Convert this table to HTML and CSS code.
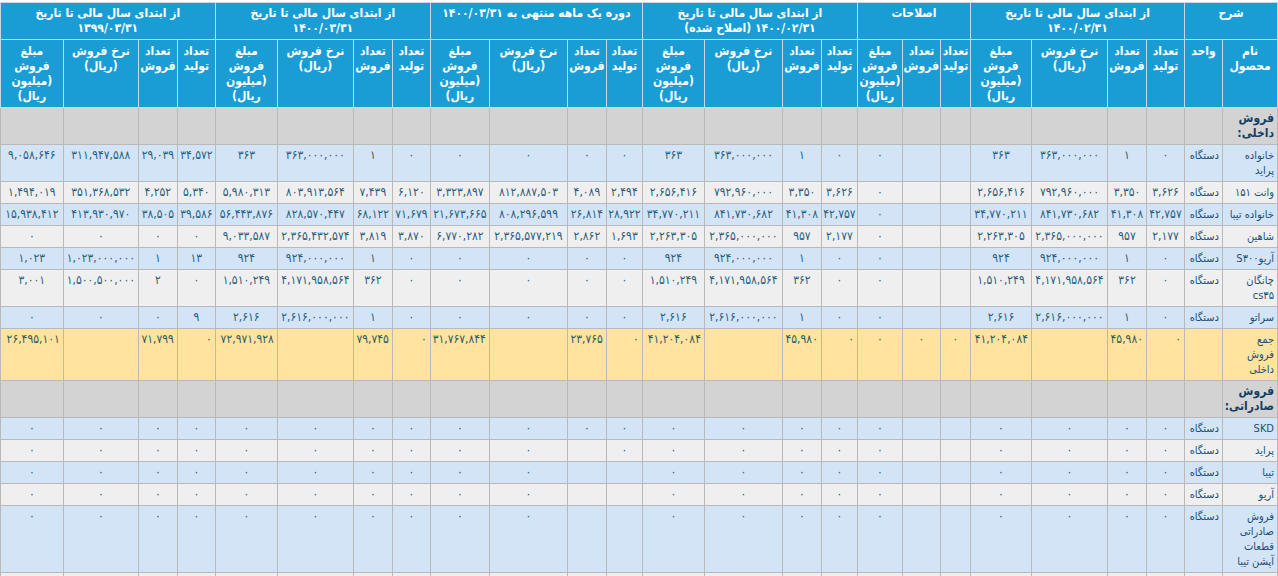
FILE: index.html
```html
<!DOCTYPE html>
<html lang="fa" dir="rtl">
<head>
<meta charset="utf-8">
<title>فروش</title>
<link rel="stylesheet" href="styles.css">
</head>
<body>
<table class="sales">
<colgroup>
<col class="w55"><col class="w38">
<col class="w38"><col class="w39"><col class="w76"><col class="w61">
<col class="w30"><col class="w38"><col class="w45">
<col class="w36"><col class="w39"><col class="w78"><col class="w62">
<col class="w36"><col class="w39"><col class="w78"><col class="w59">
<col class="w38"><col class="w39"><col class="w76"><col class="w62">
<col class="w38"><col class="w39"><col class="w75"><col class="w63">
</colgroup>
<thead>
<tr class="h1">
<th colspan="2">شرح</th>
<th colspan="4">از ابتدای سال مالی تا تاریخ<br>۱۴۰۰/۰۲/۳۱</th>
<th colspan="3">اصلاحات</th>
<th colspan="4">از ابتدای سال مالی تا تاریخ<br>۱۴۰۰/۰۲/۳۱ (اصلاح شده)</th>
<th colspan="4">دوره یک ماهه منتهی به ۱۴۰۰/۰۳/۳۱</th>
<th colspan="4">از ابتدای سال مالی تا تاریخ<br>۱۴۰۰/۰۳/۳۱</th>
<th colspan="4">از ابتدای سال مالی تا تاریخ<br>۱۳۹۹/۰۳/۳۱</th>
</tr>
<tr class="h2">
<th>نام<br>محصول</th><th>واحد</th>
<th>تعداد<br>تولید</th><th>تعداد<br>فروش</th><th>نرخ فروش<br>(ریال)</th><th>مبلغ<br>فروش<br>(میلیون<br>ریال)</th>
<th>تعداد<br>تولید</th><th>تعداد<br>فروش</th><th>مبلغ<br>فروش<br>(میلیون<br>ریال)</th>
<th>تعداد<br>تولید</th><th>تعداد<br>فروش</th><th>نرخ فروش<br>(ریال)</th><th>مبلغ<br>فروش<br>(میلیون<br>ریال)</th>
<th>تعداد<br>تولید</th><th>تعداد<br>فروش</th><th>نرخ فروش<br>(ریال)</th><th>مبلغ<br>فروش<br>(میلیون<br>ریال)</th>
<th>تعداد<br>تولید</th><th>تعداد<br>فروش</th><th>نرخ فروش<br>(ریال)</th><th>مبلغ<br>فروش<br>(میلیون<br>ریال)</th>
<th>تعداد<br>تولید</th><th>تعداد<br>فروش</th><th>نرخ فروش<br>(ریال)</th><th>مبلغ<br>فروش<br>(میلیون<br>ریال)</th>
</tr>
</thead>
<tbody>
<tr class="section">
<td class="lbl sec">فروش<br>داخلی:</td><td></td>
<td></td><td></td><td></td><td></td>
<td></td><td></td><td></td>
<td></td><td></td><td></td><td></td>
<td></td><td></td><td></td><td></td>
<td></td><td></td><td></td><td></td>
<td></td><td></td><td></td><td></td>
</tr>
<tr class="blue">
<td class="lbl">خانواده<br>پراید</td><td class="lbl">دستگاه</td>
<td>۰</td><td>۱</td><td>۳۶۳,۰۰۰,۰۰۰</td><td>۳۶۳</td>
<td></td><td></td><td>۰</td>
<td>۰</td><td>۱</td><td>۳۶۳,۰۰۰,۰۰۰</td><td>۳۶۳</td>
<td>۰</td><td>۰</td><td>۰</td><td>۰</td>
<td>۰</td><td>۱</td><td>۳۶۳,۰۰۰,۰۰۰</td><td>۳۶۳</td>
<td>۳۴,۵۷۲</td><td>۲۹,۰۳۹</td><td>۳۱۱,۹۴۷,۵۸۸</td><td>۹,۰۵۸,۶۴۶</td>
</tr>
<tr class="light">
<td class="lbl">وانت ۱۵۱</td><td class="lbl">دستگاه</td>
<td>۳,۶۲۶</td><td>۳,۳۵۰</td><td>۷۹۲,۹۶۰,۰۰۰</td><td>۲,۶۵۶,۴۱۶</td>
<td></td><td></td><td>۰</td>
<td>۳,۶۲۶</td><td>۳,۳۵۰</td><td>۷۹۲,۹۶۰,۰۰۰</td><td>۲,۶۵۶,۴۱۶</td>
<td>۲,۴۹۴</td><td>۴,۰۸۹</td><td>۸۱۲,۸۸۷,۵۰۳</td><td>۳,۳۲۳,۸۹۷</td>
<td>۶,۱۲۰</td><td>۷,۴۳۹</td><td>۸۰۳,۹۱۳,۵۶۴</td><td>۵,۹۸۰,۳۱۳</td>
<td>۵,۳۴۰</td><td>۴,۲۵۲</td><td>۳۵۱,۳۶۸,۵۳۲</td><td>۱,۴۹۴,۰۱۹</td>
</tr>
<tr class="blue">
<td class="lbl">خانواده تیبا</td><td class="lbl">دستگاه</td>
<td>۴۲,۷۵۷</td><td>۴۱,۳۰۸</td><td>۸۴۱,۷۳۰,۶۸۲</td><td>۳۴,۷۷۰,۲۱۱</td>
<td></td><td></td><td>۰</td>
<td>۴۲,۷۵۷</td><td>۴۱,۳۰۸</td><td>۸۴۱,۷۳۰,۶۸۲</td><td>۳۴,۷۷۰,۲۱۱</td>
<td>۲۸,۹۲۲</td><td>۲۶,۸۱۴</td><td>۸۰۸,۲۹۶,۵۹۹</td><td>۲۱,۶۷۳,۶۶۵</td>
<td>۷۱,۶۷۹</td><td>۶۸,۱۲۲</td><td>۸۲۸,۵۷۰,۴۴۷</td><td>۵۶,۴۴۳,۸۷۶</td>
<td>۳۹,۵۸۶</td><td>۳۸,۵۰۵</td><td>۴۱۳,۹۳۰,۹۷۰</td><td>۱۵,۹۳۸,۴۱۲</td>
</tr>
<tr class="light">
<td class="lbl">شاهین</td><td class="lbl">دستگاه</td>
<td>۲,۱۷۷</td><td>۹۵۷</td><td>۲,۳۶۵,۰۰۰,۰۰۰</td><td>۲,۲۶۳,۳۰۵</td>
<td></td><td></td><td>۰</td>
<td>۲,۱۷۷</td><td>۹۵۷</td><td>۲,۳۶۵,۰۰۰,۰۰۰</td><td>۲,۲۶۳,۳۰۵</td>
<td>۱,۶۹۳</td><td>۲,۸۶۲</td><td>۲,۳۶۵,۵۷۷,۲۱۹</td><td>۶,۷۷۰,۲۸۲</td>
<td>۳,۸۷۰</td><td>۳,۸۱۹</td><td>۲,۳۶۵,۴۳۲,۵۷۴</td><td>۹,۰۳۳,۵۸۷</td>
<td>۰</td><td>۰</td><td>۰</td><td>۰</td>
</tr>
<tr class="blue">
<td class="lbl">آریوS۳۰۰</td><td class="lbl">دستگاه</td>
<td>۰</td><td>۱</td><td>۹۲۴,۰۰۰,۰۰۰</td><td>۹۲۴</td>
<td></td><td></td><td>۰</td>
<td>۰</td><td>۱</td><td>۹۲۴,۰۰۰,۰۰۰</td><td>۹۲۴</td>
<td>۰</td><td>۰</td><td>۰</td><td>۰</td>
<td>۰</td><td>۱</td><td>۹۲۴,۰۰۰,۰۰۰</td><td>۹۲۴</td>
<td>۱۳</td><td>۱</td><td>۱,۰۲۳,۰۰۰,۰۰۰</td><td>۱,۰۲۳</td>
</tr>
<tr class="light">
<td class="lbl">چانگان<br>cs۳۵</td><td class="lbl">دستگاه</td>
<td>۰</td><td>۳۶۲</td><td>۴,۱۷۱,۹۵۸,۵۶۴</td><td>۱,۵۱۰,۲۴۹</td>
<td></td><td></td><td>۰</td>
<td>۰</td><td>۳۶۲</td><td>۴,۱۷۱,۹۵۸,۵۶۴</td><td>۱,۵۱۰,۲۴۹</td>
<td>۰</td><td>۰</td><td>۰</td><td>۰</td>
<td>۰</td><td>۳۶۲</td><td>۴,۱۷۱,۹۵۸,۵۶۴</td><td>۱,۵۱۰,۲۴۹</td>
<td>۰</td><td>۲</td><td>۱,۵۰۰,۵۰۰,۰۰۰</td><td>۳,۰۰۱</td>
</tr>
<tr class="blue">
<td class="lbl">سراتو</td><td class="lbl">دستگاه</td>
<td>۰</td><td>۱</td><td>۲,۶۱۶,۰۰۰,۰۰۰</td><td>۲,۶۱۶</td>
<td></td><td></td><td>۰</td>
<td>۰</td><td>۱</td><td>۲,۶۱۶,۰۰۰,۰۰۰</td><td>۲,۶۱۶</td>
<td>۰</td><td>۰</td><td>۰</td><td>۰</td>
<td>۰</td><td>۱</td><td>۲,۶۱۶,۰۰۰,۰۰۰</td><td>۲,۶۱۶</td>
<td>۹</td><td>۰</td><td>۰</td><td>۰</td>
</tr>
<tr class="total">
<td class="lbl">جمع<br>فروش<br>داخلی</td><td></td>
<td class="r">۰</td><td class="r">۴۵,۹۸۰</td><td></td><td class="r">۴۱,۲۰۴,۰۸۴</td>
<td>۰</td><td>۰</td><td>۰</td>
<td class="r">۰</td><td class="r">۴۵,۹۸۰</td><td></td><td class="r">۴۱,۲۰۴,۰۸۴</td>
<td class="r">۰</td><td class="r">۲۳,۷۶۵</td><td></td><td class="r">۳۱,۷۶۷,۸۴۴</td>
<td class="r">۰</td><td class="r">۷۹,۷۴۵</td><td></td><td class="r">۷۲,۹۷۱,۹۲۸</td>
<td class="r">۰</td><td class="r">۷۱,۷۹۹</td><td></td><td class="r">۲۶,۴۹۵,۱۰۱</td>
</tr>
<tr class="section">
<td class="lbl sec">فروش<br>صادراتی:</td><td></td>
<td></td><td></td><td></td><td></td>
<td></td><td></td><td></td>
<td></td><td></td><td></td><td></td>
<td></td><td></td><td></td><td></td>
<td></td><td></td><td></td><td></td>
<td></td><td></td><td></td><td></td>
</tr>
<tr class="blue">
<td class="lbl">SKD</td><td class="lbl">دستگاه</td>
<td>۰</td><td>۰</td><td>۰</td><td>۰</td>
<td></td><td></td><td>۰</td>
<td>۰</td><td>۰</td><td>۰</td><td>۰</td>
<td>۰</td><td>۰</td><td>۰</td><td>۰</td>
<td>۰</td><td>۰</td><td>۰</td><td>۰</td>
<td>۰</td><td>۰</td><td>۰</td><td>۰</td>
</tr>
<tr class="light">
<td class="lbl">پراید</td><td class="lbl">دستگاه</td>
<td>۰</td><td>۰</td><td>۰</td><td>۰</td>
<td></td><td></td><td>۰</td>
<td>۰</td><td>۰</td><td>۰</td><td>۰</td>
<td>۰</td><td></td><td>۰</td><td>۰</td>
<td>۰</td><td>۰</td><td>۰</td><td>۰</td>
<td>۰</td><td>۰</td><td>۰</td><td>۰</td>
</tr>
<tr class="blue">
<td class="lbl">تیبا</td><td class="lbl">دستگاه</td>
<td>۰</td><td>۰</td><td>۰</td><td>۰</td>
<td></td><td></td><td>۰</td>
<td>۰</td><td>۰</td><td>۰</td><td>۰</td>
<td></td><td></td><td>۰</td><td>۰</td>
<td>۰</td><td>۰</td><td>۰</td><td>۰</td>
<td>۰</td><td>۰</td><td>۰</td><td>۰</td>
</tr>
<tr class="light">
<td class="lbl">آریو</td><td class="lbl">دستگاه</td>
<td>۰</td><td>۰</td><td>۰</td><td>۰</td>
<td></td><td></td><td>۰</td>
<td>۰</td><td>۰</td><td>۰</td><td>۰</td>
<td></td><td></td><td>۰</td><td>۰</td>
<td>۰</td><td>۰</td><td>۰</td><td>۰</td>
<td>۰</td><td>۰</td><td>۰</td><td>۰</td>
</tr>
<tr class="blue">
<td class="lbl">فروش<br>صادراتی<br>قطعات<br>آپشن تیبا</td><td class="lbl">دستگاه</td>
<td>۰</td><td>۰</td><td>۰</td><td>۰</td>
<td></td><td></td><td>۰</td>
<td>۰</td><td>۰</td><td>۰</td><td>۰</td>
<td></td><td></td><td>۰</td><td>۰</td>
<td>۰</td><td>۰</td><td>۰</td><td>۰</td>
<td>۰</td><td>۰</td><td>۰</td><td>۰</td>
</tr>
<tr class="light">
<td class="lbl"></td><td></td>
<td></td><td></td><td></td><td></td>
<td></td><td></td><td></td>
<td></td><td></td><td></td><td></td>
<td></td><td></td><td></td><td></td>
<td></td><td></td><td></td><td></td>
<td></td><td></td><td></td><td></td>
</tr>
</tbody>
</table>
</body>
</html>
```
FILE: styles.css
```css
html {
  direction: rtl;
}
body {
  margin: 0;
  padding-top: 2px;
  background: #ffffff;
  font-family: "DejaVu Sans Condensed", "DejaVu Sans", sans-serif;
  font-size: 12px;
}
.sales {
  border-collapse: collapse;
  table-layout: fixed;
  width: 1277px;
}
.w30 { width: 30px; }
.w36 { width: 36px; }
.w38 { width: 38px; }
.w39 { width: 39px; }
.w45 { width: 45px; }
.w55 { width: 55px; }
.w59 { width: 59px; }
.w61 { width: 61px; }
.w62 { width: 62px; }
.w63 { width: 63px; }
.w75 { width: 75px; }
.w76 { width: 76px; }
.w78 { width: 78px; }
.sales th {
  background: #1a9dd4;
  color: #ffffff;
  font-weight: bold;
  border: 1px solid #c9d8e0;
  vertical-align: top;
  text-align: center;
  line-height: 15px;
  padding: 3px 1px;
}
.sales .h2 th {
  padding: 4px 1px 3px;
}
.sales td {
  border: 1px solid #b9b9b9;
  vertical-align: top;
  text-align: center;
  line-height: 15px;
  height: 15px;
  padding: 3px 1px;
  color: #2a5d7e;
  white-space: nowrap;
  overflow: hidden;
}
.sales td.lbl {
  text-align: right;
  font-size: 11px;
  color: #1f4f78;
  padding-right: 3px;
  padding-left: 0;
}
.sales td.sec {
  font-size: 12px;
  font-weight: bold;
  color: #173f60;
}
.sales td.r {
  text-align: right;
  padding-right: 3px;
}
.blue td { background: #d2e4f6; }
.light td { background: #efefef; }
.section td { background: #d3d3d3; }
.total td { background: #ffe39e; color: #2e5a5e; }
```
